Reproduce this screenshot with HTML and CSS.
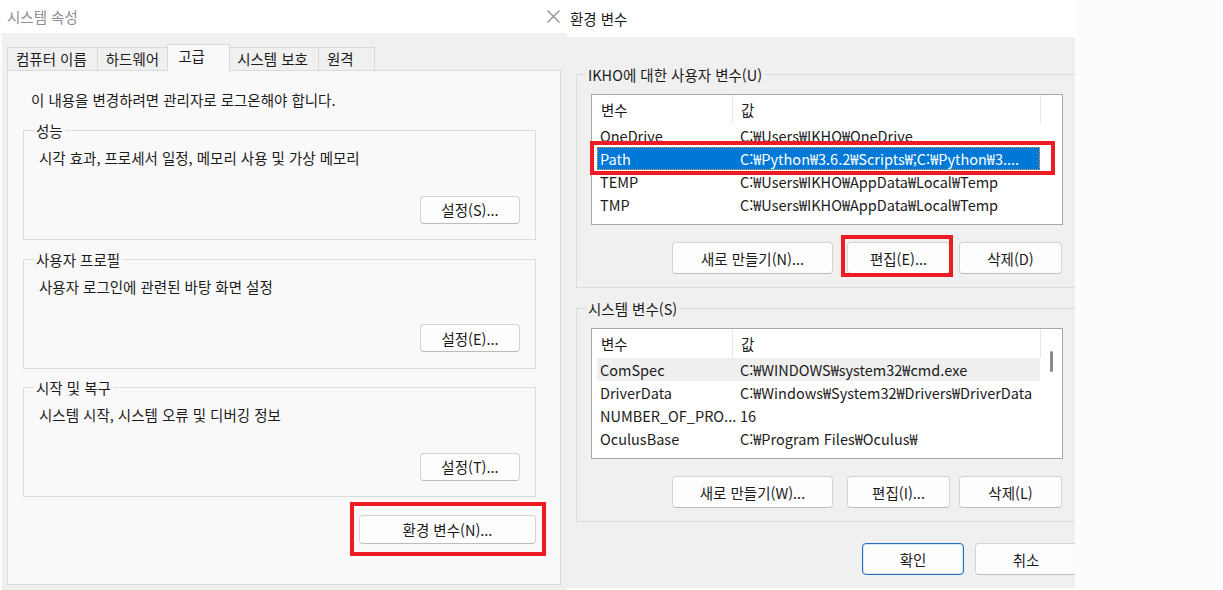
FILE: index.html
```html
<!DOCTYPE html>
<html lang="ko">
<head>
    <meta charset="UTF-8">
    <meta name="viewport" content="width=device-width, initial-scale=1.0">
    <title>시스템 속성 - 환경 변수</title>
    <link rel="stylesheet" href="styles.css">
</head>
<body>
<div class="screen">

    <!-- 시스템 속성 -->
    <div class="dialog sys-props">
        <div class="titlebar">
            <span class="title">시스템 속성</span>
            <svg class="close" viewBox="0 0 13 13" aria-hidden="true">
                <path d="M0.5 0.5 L12.5 12.5 M12.5 0.5 L0.5 12.5" />
            </svg>
        </div>
        <div class="dialog-body">
            <div class="tabs">
                <div class="tab">컴퓨터 이름</div>
                <div class="tab">하드웨어</div>
                <div class="tab active">고급</div>
                <div class="tab">시스템 보호</div>
                <div class="tab tab-last">원격</div>
            </div>
            <div class="tab-panel">
                <p class="notice">이 내용을 변경하려면 관리자로 로그온해야 합니다.</p>

                <fieldset class="group">
                    <legend>성능</legend>
                    <p class="group-text">시각 효과, 프로세서 일정, 메모리 사용 및 가상 메모리</p>
                    <div class="group-actions"><button class="btn">설정(S)...</button></div>
                </fieldset>

                <fieldset class="group">
                    <legend>사용자 프로필</legend>
                    <p class="group-text">사용자 로그인에 관련된 바탕 화면 설정</p>
                    <div class="group-actions"><button class="btn">설정(E)...</button></div>
                </fieldset>

                <fieldset class="group">
                    <legend>시작 및 복구</legend>
                    <p class="group-text">시스템 시작, 시스템 오류 및 디버깅 정보</p>
                    <div class="group-actions"><button class="btn">설정(T)...</button></div>
                </fieldset>

                <div class="panel-actions">
                    <span class="mark mark-env"><button class="btn btn-env">환경 변수(N)...</button></span>
                </div>
            </div>
        </div>
    </div>

    <!-- 환경 변수 -->
    <div class="dialog env-vars">
        <div class="titlebar">
            <span class="title">환경 변수</span>
        </div>
        <div class="dialog-body">
            <fieldset class="var-group">
                <legend>IKHO에 대한 사용자 변수(U)</legend>
                <div class="var-list">
                    <div class="list-main">
                        <div class="list-head">
                            <div class="head-name">변수</div>
                            <div class="head-value">값</div>
                        </div>
                        <div class="row"><span class="cell-name">OneDrive</span><span class="cell-value">C:₩Users₩IKHO₩OneDrive</span></div>
                        <div class="row selected marked"><span class="cell-name">Path</span><span class="cell-value">C:₩Python₩3.6.2₩Scripts₩;C:₩Python₩3....</span></div>
                        <div class="row"><span class="cell-name">TEMP</span><span class="cell-value">C:₩Users₩IKHO₩AppData₩Local₩Temp</span></div>
                        <div class="row"><span class="cell-name">TMP</span><span class="cell-value">C:₩Users₩IKHO₩AppData₩Local₩Temp</span></div>
                    </div>
                    <div class="list-scroll"></div>
                </div>
                <div class="var-actions">
                    <button class="btn btn-new">새로 만들기(N)...</button>
                    <span class="mark mark-edit"><button class="btn btn-edit">편집(E)...</button></span>
                    <button class="btn btn-del">삭제(D)</button>
                </div>
            </fieldset>

            <fieldset class="var-group">
                <legend>시스템 변수(S)</legend>
                <div class="var-list clipped">
                    <div class="list-main">
                        <div class="list-head">
                            <div class="head-name">변수</div>
                            <div class="head-value">값</div>
                        </div>
                        <div class="row hover"><span class="cell-name">ComSpec</span><span class="cell-value">C:₩WINDOWS₩system32₩cmd.exe</span></div>
                        <div class="row"><span class="cell-name">DriverData</span><span class="cell-value">C:₩Windows₩System32₩Drivers₩DriverData</span></div>
                        <div class="row"><span class="cell-name">NUMBER_OF_PRO...</span><span class="cell-value">16</span></div>
                        <div class="row"><span class="cell-name">OculusBase</span><span class="cell-value">C:₩Program Files₩Oculus₩</span></div>
                    </div>
                    <div class="list-scroll"><div class="thumb"></div></div>
                </div>
                <div class="var-actions">
                    <button class="btn btn-new">새로 만들기(W)...</button>
                    <button class="btn btn-edit">편집(I)...</button>
                    <button class="btn btn-del">삭제(L)</button>
                </div>
            </fieldset>

            <div class="footer-actions">
                <button class="btn btn-ok primary">확인</button>
                <button class="btn btn-ok">취소</button>
            </div>
        </div>
    </div>

</div>
</body>
</html>
```

FILE: styles.css
```css
/* Grunnoppsett */
* {
    box-sizing: border-box;
}

body {
    margin: 0;
    background-color: #fcfcfc;
    color: #1b1b1b;
    font-family: "Noto Sans CJK KR", "Noto Sans", sans-serif;
    font-size: 14.5px;
    line-height: 17px;
}

.screen {
    display: flex;
    height: 590px;
    overflow: hidden;
}

.dialog {
    display: flex;
    flex-direction: column;
}

.titlebar {
    display: flex;
    align-items: center;
    justify-content: space-between;
    background-color: #fff;
}

.close {
    width: 13px;
    height: 13px;
    fill: none;
    stroke: #8a8a8a;
    stroke-width: 1.1;
}

/* Knapper */
.btn {
    height: 28px;
    width: 100px;
    padding: 0;
    background-color: #fdfdfd;
    border: 1px solid #d4d4d4;
    border-bottom-color: #bdbdbd;
    border-radius: 4px;
    font-family: inherit;
    font-size: 14.5px;
    color: #1b1b1b;
}

.btn.primary {
    border: 1px solid #1f6fc0;
    box-shadow: inset 0 0 0 1px #d7e6f5;
}

/* Røde markeringer */
.mark {
    position: relative;
    display: inline-flex;
}

.mark::after,
.row.marked::after {
    content: "";
    position: absolute;
    border: 4px solid #ed1c24;
    pointer-events: none;
}

.mark-env::after {
    top: -13px;
    left: -9px;
    right: -10px;
    bottom: -12px;
}

.mark-edit::after {
    top: -7px;
    left: -6px;
    right: -3px;
    bottom: -3px;
}

.row.marked {
    position: relative;
}

.row.marked::after {
    top: -6px;
    left: -7px;
    right: -15px;
    bottom: -5px;
}

/* Systemegenskaper */
.sys-props {
    width: 567px;
}

.sys-props .titlebar {
    height: 33px;
    padding: 0 7px 0 7px;
}

.sys-props .title {
    color: #8e8e8e;
}

.sys-props .dialog-body {
    flex: 1;
    margin-left: 2px;
    padding: 12px 6px 0 5px;
    background-color: #f0f0f0;
}

.tabs {
    display: flex;
    align-items: flex-end;
    height: 25px;
}

.tab {
    position: relative;
    height: 23px;
    padding: 0 10px 0 8px;
    margin-right: -1px;
    line-height: 22px;
    background-color: #f0f0f0;
    border: 1px solid #d9d9d9;
    border-bottom: none;
}

.tab.active {
    z-index: 2;
    width: 63px;
    height: 27px;
    padding-left: 10px;
    margin: 0 -2px -1px -2px;
    line-height: 21px;
    background-color: #f9f9f9;
}

.tab-last {
    min-width: 57px;
}

.tab-panel {
    height: 515px;
    padding: 20px 24px 0 15px;
    background-color: #f9f9f9;
    border: 1px solid #dadada;
}

.notice {
    margin: 0;
    padding-left: 8px;
}

.group {
    height: 118px;
    margin: 10.5px 0 0 0;
    padding: 10px 15px 0 15px;
    border: 1px solid #dcdcdc;
}

.notice + .group {
    margin-top: 14px;
}

.group legend,
.var-group legend {
    padding: 0 2px;
    margin-left: -5px;
}

.group-text {
    margin: 0;
}

.group-actions {
    display: flex;
    justify-content: flex-end;
    margin-top: 29.5px;
}

.panel-actions {
    display: flex;
    justify-content: flex-end;
    margin-top: 18px;
}

.btn-env {
    width: 177px;
    height: 29px;
}

/* Miljøvariabler */
.env-vars {
    width: 508px;
}

.env-vars .titlebar {
    height: 37px;
    padding-left: 3px;
}

.env-vars .title {
    color: #1b1b1b;
}

.env-vars .dialog-body {
    height: 551px;
    flex: none;
    overflow: hidden;
    padding: 28.5px 0 0 9px;
    background-color: #f0f0f0;
}

.var-group {
    margin: 0 -30px 0 0;
    padding: 11.5px 0 13px 14px;
    border: 1px solid #dcdcdc;
}

.var-group + .var-group {
    margin-top: 11.5px;
}

.var-list {
    display: flex;
    width: 472px;
    height: 131px;
    background-color: #fff;
    border: 1px solid #a8a8a8;
}

.var-list.clipped {
    overflow: hidden;
}

.list-main {
    width: 449px;
}

.list-head {
    display: flex;
    height: 29px;
    line-height: 29px;
}

.head-name {
    width: 141px;
    padding-left: 9px;
    border-right: 1px solid #e8e8e8;
}

.head-value {
    flex: 1;
    padding-left: 8px;
    border-right: 1px solid #e8e8e8;
}

.row {
    display: flex;
    height: 23px;
    margin: 0 1px 0 5px;
    line-height: 23px;
    white-space: nowrap;
}

.cell-name {
    width: 143px;
    padding-left: 3px;
    overflow: hidden;
}

.cell-value {
    flex: 1;
    overflow: hidden;
}

.row.selected {
    background-color: #0078d7;
    color: #fff;
    outline: 1px dotted #e9a23b;
    outline-offset: -1px;
}

.row.hover {
    background-color: #efefef;
}

.list-scroll {
    flex: 1;
}

.thumb {
    width: 3px;
    height: 21px;
    margin: 22px 0 0 9px;
    background-color: #8a8a8a;
    border-radius: 2px;
}

.var-actions {
    display: flex;
    justify-content: flex-end;
    width: 472px;
    margin-top: 17px;
    padding-right: 1px;
}

.var-actions .btn {
    height: 32px;
}

.btn-new {
    width: 161px;
    margin-right: 14px;
}

.btn-edit {
    width: 103px;
}

.mark-edit,
.var-actions > .btn-edit {
    margin-right: 9px;
}

.btn-del {
    width: 103px;
}

.footer-actions {
    display: flex;
    justify-content: flex-end;
    gap: 11px;
    margin: 21px -2px 0 0;
}

.btn-ok {
    width: 102px;
    height: 32px;
}
```
